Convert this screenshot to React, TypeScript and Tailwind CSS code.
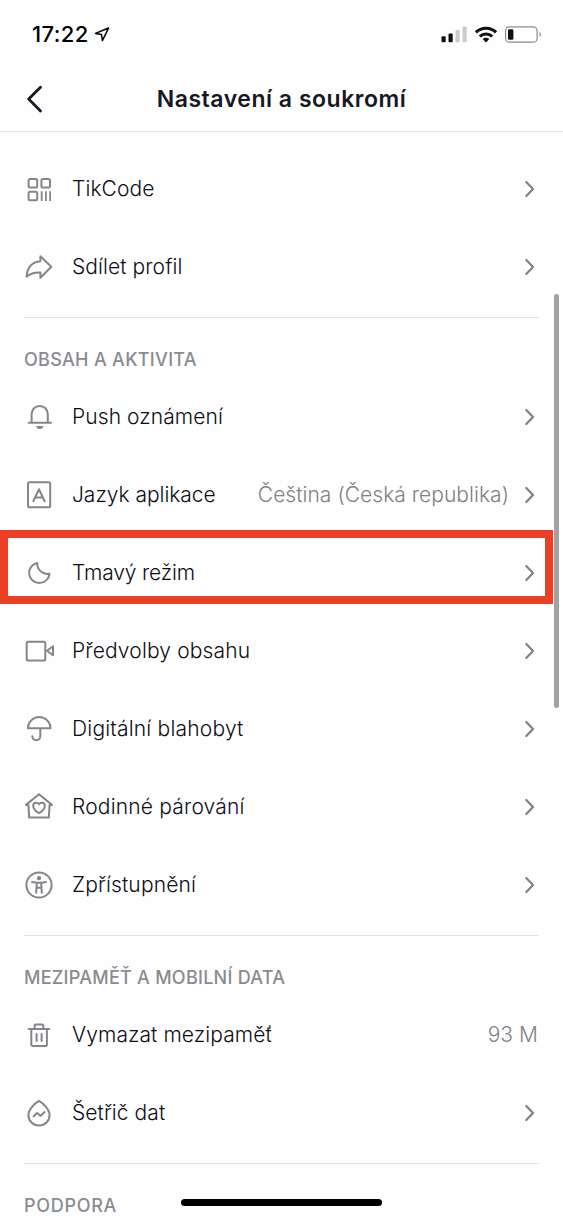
import type { ReactNode } from 'react';

interface RowProps {
  icon: ReactNode;
  label: string;
  tracking?: string;
  value?: string;
  chevron?: boolean;
}

function Icon({ children }: { children: ReactNode }) {
  return (
    <svg
      width="30"
      height="30"
      viewBox="0 0 30 30"
      fill="none"
      stroke="currentColor"
      strokeWidth="2"
      strokeLinecap="round"
      strokeLinejoin="round"
      className="shrink-0 text-[#85868b]"
    >
      {children}
    </svg>
  );
}

const icons = {
  code: (
    <Icon>
      <rect x="4.6" y="4.9" width="8.6" height="8.6" rx="1.5" />
      <rect x="17.4" y="4.9" width="8.6" height="8.6" rx="1.5" />
      <rect x="4.6" y="17.7" width="8.6" height="8.6" rx="1.5" />
      <path d="M17.7 17.3v9.6M21.9 17.3v9.6M26.1 17.3v9.6" strokeLinecap="butt" strokeWidth="1.8" />
    </Icon>
  ),
  share: (
    <Icon>
      <path d="M16.4 4.3 27.3 14.8 16.4 25.7V20.6C10.5 20.4 6.6 21.4 2.6 24.6 3.2 15.6 8 10 16.4 9.2Z" />
    </Icon>
  ),
  bell: (
    <Icon>
      <path d="M4.6 20.7H27.1M7.6 20.2V12a8.1 8.1 0 0 1 16.2 0v8.2" />
      <path d="M12.4 24.1h6.8a3.4 3 0 0 1-6.8 0Z" fill="currentColor" stroke="none" />
    </Icon>
  ),
  language: (
    <Icon>
      <rect x="4" y="2.3" width="22.2" height="25" rx="1.6" />
      <path d="M9.3 21.2 15 9.2l5.7 12M11 17.6h8" />
    </Icon>
  ),
  moon: (
    <Icon>
      <path d="M13.2 4.9A10.2 10.2 0 1 0 25.5 15.8C19 16.8 13 12.5 13.2 4.9Z" />
    </Icon>
  ),
  video: (
    <Icon>
      <rect x="2.7" y="5.8" width="18.6" height="18.7" rx="1.6" />
      <path d="m23 14.8 6-4.5v9Z" />
    </Icon>
  ),
  umbrella: (
    <Icon>
      <path d="M3.9 14.2a11.3 11.1 0 0 1 22.6 0ZM16.3 14.2v8a4 4 0 0 1-8 0" />
    </Icon>
  ),
  family: (
    <Icon>
      <path d="M15 2.3 28 12.9H25.6L24.8 25.6H5.2L4.4 12.9H2Z" />
      <path d="M15 21.1C11.5 19 9.2 16.8 9.2 13.9 9.2 10.6 13 9.6 15 12.2 17 9.6 20.8 10.6 20.8 13.9 20.8 16.8 18.5 19 15 21.1Z" />
    </Icon>
  ),
  accessibility: (
    <Icon>
      <circle cx="15" cy="15" r="12.6" />
      <circle cx="15" cy="8.1" r="2.2" fill="currentColor" stroke="none" />
      <path d="m8 12 4.7.8h4.6l4.7-.8M12.8 12.8 12.2 22.7M17.2 12.8l.6 9.9M12.6 17.8h4.8" />
    </Icon>
  ),
  trash: (
    <Icon>
      <path d="M4.6 8.9h20.8M10.7 8.4V5.3a.9.9 0 0 1 .9-.9h6.8a.9.9 0 0 1 .9.9v3.3M7.3 9v15.4a1.6 1.6 0 0 0 1.6 1.6h12.4a1.6 1.6 0 0 0 1.6-1.6V9M12.6 13.9v7M17.6 13.9v7" />
    </Icon>
  ),
  drop: (
    <Icon>
      <path d="M15 2.9C18.8 5 25.6 11.5 25.6 17.2A10.6 10.2 0 0 1 4.4 17.2C4.4 11.5 11.2 5 15 2.9Z" />
      <path d="m9.6 18.3 3.1-3.1q.5-.5 1 0l2.3 2.3q.5.5 1 0l3.6-3.4" />
    </Icon>
  ),
};

function Row({ icon, label, tracking = 'tracking-[0.08px]', value, chevron = true }: RowProps) {
  return (
    <div className="flex h-[78px] items-center pr-[25px] pl-6">
      {icon}
      <span className={`ml-[18px] text-[21px] font-light whitespace-nowrap text-[#0c0d14] ${tracking}`}>{label}</span>
      {value && (
        <span className="ml-auto text-[21px] font-light whitespace-nowrap text-[#808186] tracking-[0.04px]">{value}</span>
      )}
      {chevron && (
        <svg width="12" height="18" viewBox="0 0 12 18" fill="none" className={`shrink-0 ${value ? 'ml-[15px]' : 'ml-auto'} mr-[2px]`}>
          <path d="M2.3 2 9 9l-6.7 7" stroke="#808186" strokeWidth="2.2" strokeLinecap="round" strokeLinejoin="round" />
        </svg>
      )}
    </div>
  );
}

function SectionTitle({ title, tracking }: { title: string; tracking: string }) {
  return (
    <>
      <div className="mx-6 mt-[11px] h-px bg-[#e3e3e4]" />
      <h2 className={`mt-[30px] mb-[6px] ml-6 h-6 text-[18px] leading-6 font-medium whitespace-nowrap text-[#8a8b91] ${tracking}`}>{title}</h2>
    </>
  );
}

function StatusBar() {
  return (
    <div className="flex h-[69px] items-center pl-8 text-black">
      <span className="w-[57px] text-[22px] font-medium tracking-[0.4px] whitespace-nowrap">17:22</span>
      <svg width="18" height="18" viewBox="94 26 18 18" fill="none" className="ml-[5px]">
        <path d="M108.6 28 95.5 33.4l6 1.1.9 6.1Z" stroke="currentColor" strokeWidth="1.5" strokeLinejoin="round" />
      </svg>
      <svg width="102" height="18" viewBox="441 26 102 18" fill="none" className="mr-5 ml-auto">
        <rect x="441.5" y="36.3" width="4.2" height="6" rx="1" fill="#111" />
        <rect x="448.5" y="33.5" width="4.2" height="8.8" rx="1" fill="#111" />
        <rect x="455.5" y="30" width="4.2" height="12.3" rx="1" fill="#ccc" />
        <rect x="462.5" y="26.6" width="4.2" height="15.7" rx="1" fill="#ccc" />
        <g stroke="#111" strokeWidth="3">
          <path d="M475.9 32.4a14.2 14.2 0 0 1 20.2 0" />
          <path d="M479.8 36.5a8.8 8.8 0 0 1 12.4 0" />
        </g>
        <path d="m486 42.4-3.3-3.3a4.7 4.7 0 0 1 6.6 0Z" fill="#111" />
        <rect x="505.6" y="26.9" width="31.5" height="15.3" rx="3.8" stroke="#8b8b8b" strokeWidth="1.2" />
        <rect x="508" y="29.3" width="5.4" height="10.5" rx="1.4" fill="#111" />
        <path d="M539.6 32.1a2.8 2.8 0 0 1 0 4.8Z" fill="#8b8b8b" />
      </svg>
    </div>
  );
}

export default function App() {
  return (
    <div className="relative h-[1218px] w-[563px] overflow-hidden bg-[#fefefe] font-['Inter','Liberation_Sans',sans-serif]">
      <StatusBar />
      <header className="flex h-[63px] items-center border-b border-[#e6e6e7] pb-[2px] pl-[26px] text-[#161823]">
        <svg width="17" height="30" viewBox="0 0 17 30" fill="none">
          <path d="M14.5 3.2 2.7 15l11.8 12" stroke="currentColor" strokeWidth="2.8" strokeLinecap="round" strokeLinejoin="round" />
        </svg>
        <h1 className="mr-[43px] flex-1 text-center text-[23px] font-semibold tracking-[0.52px]">Nastavení a soukromí</h1>
      </header>

      <main className="pt-[18px]">
        <Row icon={icons.code} label="TikCode" />
        <Row icon={icons.share} label="Sdílet profil" />

        <SectionTitle title="OBSAH A AKTIVITA" tracking="tracking-[0.3px]" />
        <Row icon={icons.bell} label="Push oznámení" />
        <Row icon={icons.language} label="Jazyk aplikace" tracking="tracking-[-0.03px]" value="Čeština (Česká republika)" />
        <Row icon={icons.moon} label="Tmavý režim" tracking="tracking-[-0.15px]" />
        <Row icon={icons.video} label="Předvolby obsahu" tracking="tracking-[0.15px]" />
        <Row icon={icons.umbrella} label="Digitální blahobyt" tracking="tracking-[0.2px]" />
        <Row icon={icons.family} label="Rodinné párování" tracking="tracking-[0.18px]" />
        <Row icon={icons.accessibility} label="Zpřístupnění" tracking="tracking-[0.15px]" />

        <SectionTitle title="MEZIPAMĚŤ A MOBILNÍ DATA" tracking="tracking-[0.26px]" />
        <Row icon={icons.trash} label="Vymazat mezipaměť" value="93 M" chevron={false} />
        <Row icon={icons.drop} label="Šetřič dat" />

        <SectionTitle title="PODPORA" tracking="tracking-[0.7px]" />
      </main>

      {/* highlight around the dark mode row */}
      <div className="absolute top-[530px] left-0 h-[74px] w-[553px] border-8 border-[#eb4026]" />
      <div className="absolute top-[294px] left-[554px] h-[414px] w-[4.5px] rounded-full bg-[#a2a2a3]" />
      <div className="absolute top-[1198.5px] left-[181px] h-[7px] w-[201px] rounded-full bg-black" />
    </div>
  );
}
